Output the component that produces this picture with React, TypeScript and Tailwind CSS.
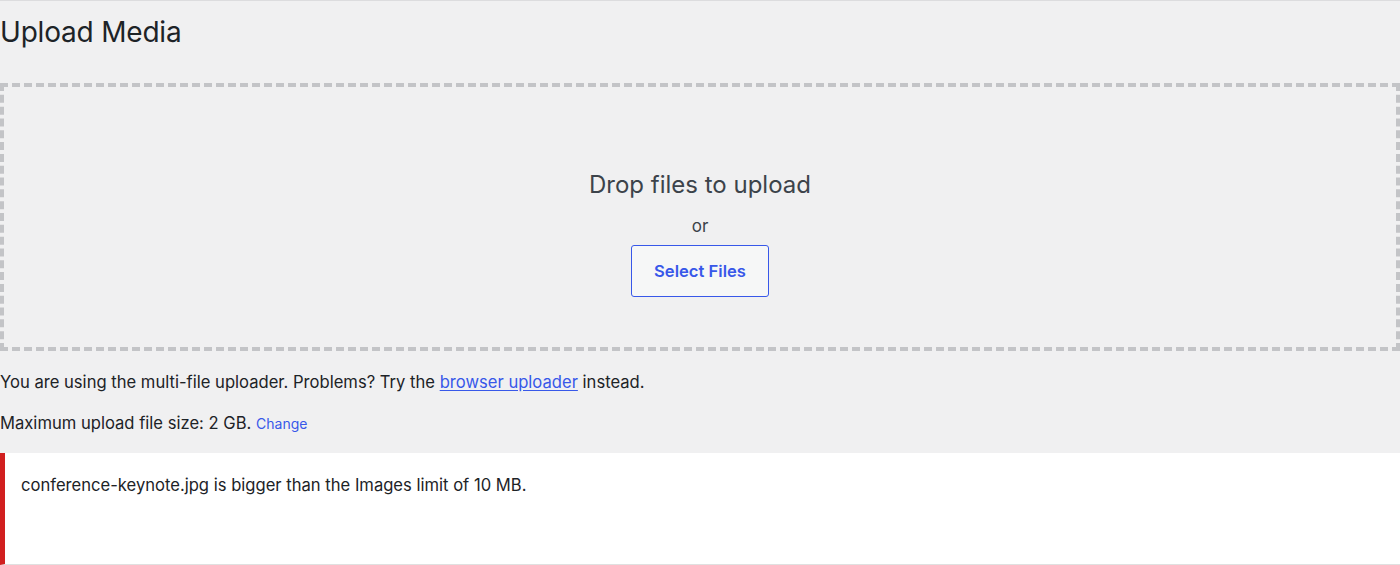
import React from 'react';

const App: React.FC = () => {
  return (
    <div className="min-h-[565px] bg-[#f0f0f1] border-t border-[#dcdcde] text-[#1d2327] font-['Inter','Liberation_Sans',sans-serif] overflow-hidden">
      <h1 className="h-[62px] flex items-center text-[28px] font-normal leading-none tracking-[-0.2px] text-[#1d2327]">
        Upload Media
      </h1>

      {/* Drop zone */}
      <div className="mt-[20px] h-[268px] border-4 border-dashed border-[#c3c4c7] flex flex-col items-center">
        <div className="mt-[83px] text-[24px] leading-[30px] text-[#3c434a]">Drop files to upload</div>
        <div className="mt-[16px] text-[17px] leading-[20px] text-[#3c434a]">or</div>
        <button className="mt-[9px] w-[138px] h-[52px] border border-[#3858e9] rounded-[3px] bg-[#f6f7f7] text-[16.6px] font-semibold text-[#3858e9]">
          Select Files
        </button>
      </div>

      <p className="mt-[20px] text-[16.6px] leading-[22px] text-[#1d2327]">
        You are using the multi-file uploader. Problems? Try the{' '}
        <a href="#" className="text-[#3858e9] underline underline-offset-2">browser uploader</a> instead.
      </p>
      <p className="mt-[19px] text-[16.6px] leading-[22px] text-[#1d2327]">
        Maximum upload file size: 2 GB.{' '}
        <a href="#" className="text-[14px] text-[#3858e9]">Change</a>
      </p>

      {/* Error notice */}
      <div className="mt-[18px] h-[112px] bg-white border-l-[5px] border-[#d11f1f] border-b border-b-[#e0e0e0] pl-[16px] pt-[21px]">
        <p className="text-[16.6px] leading-[22px] text-[#1d2327]">
          conference-keynote.jpg is bigger than the Images limit of 10 MB.
        </p>
      </div>
    </div>
  );
};

export default App;
